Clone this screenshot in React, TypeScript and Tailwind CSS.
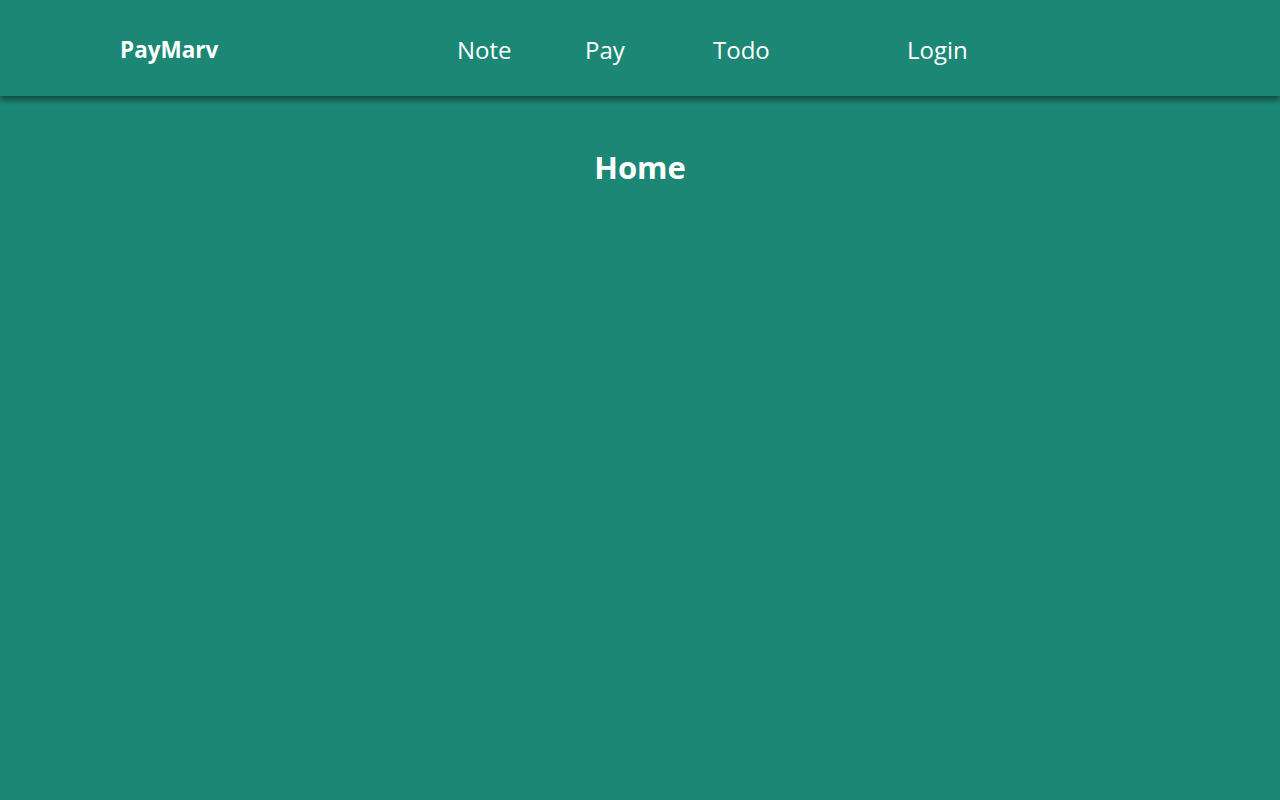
const navLinks = [
  { label: 'Note', href: '#note', width: 'w-[128px]' },
  { label: 'Pay', href: '#pay', width: 'w-[128px]' },
  { label: 'Todo', href: '#todo', width: 'w-[194px]' },
]

const Header = () => (
  <header className="h-[96px] w-full bg-[#1d8775] shadow-[0_4px_6px_rgba(0,0,0,0.45)] relative z-10">
    <div className="flex h-full items-center pl-[120px] pt-[4px]">
      <a href="#" className="w-[337px] text-[22.5px] font-bold text-white">
        PayMarv
      </a>
      <nav className="flex items-center">
        {navLinks.map((link) => (
          <a key={link.href} href={link.href} className={`${link.width} text-[24px] text-white`}>
            {link.label}
          </a>
        ))}
        <a href="#login" className="text-[24px] text-white">
          Login
        </a>
      </nav>
    </div>
  </header>
)

export default function App() {
  return (
    <div className="min-h-screen bg-[#1d8775] font-['Open_Sans',sans-serif]">
      <Header />
      <main className="pt-[49px] text-center">
        <h1 className="text-[31px] font-bold leading-[44px] text-white">Home</h1>
      </main>
    </div>
  )
}
